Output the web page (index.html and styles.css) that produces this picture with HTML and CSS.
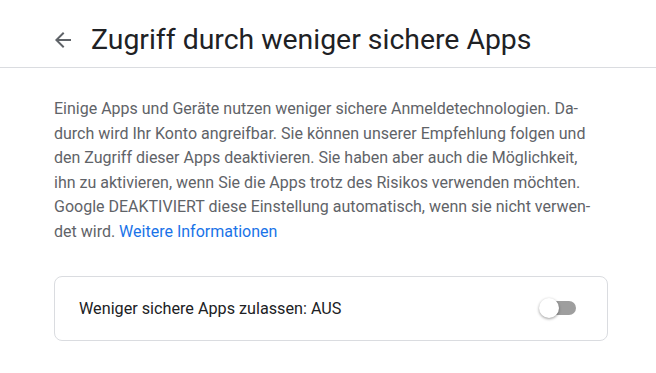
FILE: index.html
```html
<!DOCTYPE html>
<html lang="de">
<head>
    <meta charset="UTF-8">
    <meta name="viewport" content="width=device-width, initial-scale=1.0">
    <title>Zugriff durch weniger sichere Apps</title>
    <link rel="stylesheet" href="styles.css">
</head>
<body>

<header class="topbar">
    <a class="back" href="#" aria-label="Zurück">
        <svg width="24" height="24" viewBox="0 0 24 24"><path d="M20 11H7.83l5.59-5.59L12 4l-8 8 8 8 1.41-1.41L7.83 13H20v-2z" fill="#5f6368"/></svg>
    </a>
    <h1>Zugriff durch weniger sichere Apps</h1>
</header>

<main class="content">
    <p class="intro">
        Einige Apps und Geräte nutzen weniger sichere Anmeldetechnologien. Da&shy;durch wird Ihr Konto angreifbar. Sie können unserer Empfehlung folgen und den Zugriff dieser Apps deaktivieren. Sie haben aber auch die Möglichkeit, ihn zu aktivieren, wenn Sie die Apps trotz des Risikos verwenden möchten. Google DEAKTIVIERT diese Einstellung automatisch, wenn sie nicht verwen&shy;det wird. <a href="#">Weitere Informationen</a>
    </p>

    <div class="card">
        <span class="card-label">Weniger sichere Apps zulassen: AUS</span>
        <span class="toggle"><span class="track"></span><span class="thumb"></span></span>
    </div>
</main>

</body>
</html>
```

FILE: styles.css
```css
body {
    margin: 0;
    background: #fff;
    font-family: Roboto, "Liberation Sans", Arial, sans-serif;
}
.topbar {
    display: flex;
    align-items: center;
    height: 55px;
    padding: 12px 0 0 51px;
    border-bottom: 1px solid #dadce0;
}
.back {
    display: flex;
    width: 24px;
    height: 24px;
    margin-right: 16px;
}
h1 {
    margin: 0;
    font-weight: 400;
    font-size: 28.4px;
    color: #202124;
}
.content {
    padding: 29px 48px 0 54px;
}
.intro {
    margin: 0;
    width: 537px;
    font-size: 16px;
    line-height: 24.6px;
    color: #5f6368;
    hyphens: manual;
}
.intro a {
    color: #1a73e8;
    text-decoration: none;
}
.card {
    display: flex;
    align-items: center;
    justify-content: space-between;
    margin-top: 31px;
    height: 63px;
    padding: 0 31px 0 24px;
    border: 1px solid #dadce0;
    border-radius: 8px;
}
.card-label {
    font-size: 16.2px;
    color: #202124;
}
.toggle {
    position: relative;
    width: 37px;
    height: 20px;
}
.track {
    position: absolute;
    left: 3px;
    top: 3px;
    width: 34px;
    height: 14px;
    border-radius: 7px;
    background: #9e9e9e;
}
.thumb {
    position: absolute;
    left: 0;
    top: 0;
    width: 20px;
    height: 20px;
    border-radius: 50%;
    background: #fff;
    box-shadow: 0 1px 3px rgba(0, 0, 0, 0.4);
}
```
